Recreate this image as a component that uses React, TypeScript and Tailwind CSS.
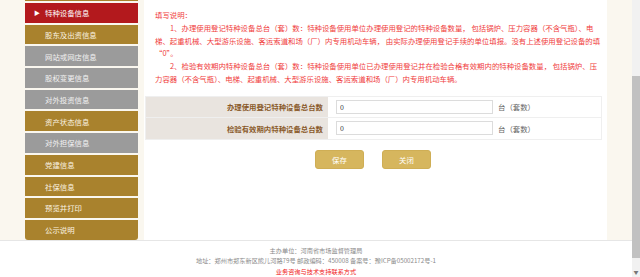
import React from "react";

type MenuItem = {
  label: string;
  tone: "active" | "gold" | "gray";
};

const menu: MenuItem[] = [
  { label: "特种设备信息", tone: "active" },
  { label: "股东及出资信息", tone: "gold" },
  { label: "网站或网店信息", tone: "gray" },
  { label: "股权变更信息", tone: "gray" },
  { label: "对外投资信息", tone: "gray" },
  { label: "资产状态信息", tone: "gold" },
  { label: "对外担保信息", tone: "gray" },
  { label: "党建信息", tone: "gold" },
  { label: "社保信息", tone: "gold" },
  { label: "预览并打印", tone: "gold" },
  { label: "公示说明", tone: "gold" },
];

const toneClass = {
  active: "bg-[#b3191d] text-white",
  gold: "bg-[#a9822d] text-[#fbf3e2]",
  gray: "bg-[#9b9b9b] text-[#f2f2f2]",
};

const font = { fontFamily: '"Noto Sans CJK SC", "Liberation Sans", sans-serif' };

function Sidebar() {
  return (
    <div className="w-[113px] flex flex-col">
      {/* bottom of the item above, scrolled off */}
      <div className="h-[1px] bg-[#a9822d]" />
      {menu.map((item, i) => (
        <div
          key={item.label}
          className={`mt-[2px] h-[19.7px] flex items-center text-[7.4px] leading-none ${toneClass[item.tone]} ${
            i === menu.length - 1 ? "rounded-b-[3px]" : ""
          }`}
        >
          <span className="w-[20px] flex justify-end pr-[5px] text-[6px]">
            {item.tone === "active" ? "▶" : ""}
          </span>
          <span>{item.label}</span>
        </div>
      ))}
    </div>
  );
}

function FormRow({ label }: { label: string }) {
  return (
    <div className="flex h-[21px] border-b border-[#efefef] last:border-b-0">
      <div className="w-[182px] bg-[#e9e4df] flex items-center justify-end pr-[5px] text-[7.4px] font-bold text-[#8a5a2a]">
        {label}
      </div>
      <div className="flex-1 flex items-center pl-[8px]">
        <input
          defaultValue="0"
          className="w-[157px] h-[14px] border border-[#dcdcdc] px-[3px] text-[7px] text-[#333] outline-none"
        />
        <span className="ml-[5px] text-[7.4px] text-[#666]">台（套数）</span>
      </div>
    </div>
  );
}

function Notes() {
  return (
    <div className="text-[7.4px] leading-[12.8px] text-[#f03c3c] whitespace-nowrap">
      <div>填写说明：</div>
      <div className="pl-[15px]">
        1、办理使用登记特种设备总台（套）数：特种设备使用单位办理使用登记的特种设备数量， 包括锅炉、压力容器（不含气瓶）、电
      </div>
      <div>
        梯、起重机械、大型游乐设施、客运索道和场（厂）内专用机动车辆， 由实际办理使用登记手续的单位填报。没有上述使用登记设备的填
      </div>
      <div>“0”。</div>
      <div className="pl-[15px]">
        2、检验有效期内特种设备总台（套）数：特种设备使用单位已办理使用登记并在检验合格有效期内的特种设备数量， 包括锅炉、压
      </div>
      <div>力容器（不含气瓶）、电梯、起重机械、大型游乐设施、客运索道和场（厂）内专用机动车辆。</div>
    </div>
  );
}

function MainPanel() {
  return (
    <div className="w-[463px] bg-white pt-[9px]">
      <div className="pl-[11px]">
        <Notes />
      </div>
      <div className="mt-[10px] ml-[1px] w-[457px] border border-[#efefef] flex flex-col">
        <FormRow label="办理使用登记特种设备总台数" />
        <FormRow label="检验有效期内特种设备总台数" />
      </div>
      <div className="mt-[10px] w-[458px] flex justify-center gap-[18px]">
        <button className="w-[49px] h-[19px] rounded-[3px] bg-[#d6b65e] border border-[#cfae55] text-white text-[7.4px]">
          保存
        </button>
        <button className="w-[49px] h-[19px] rounded-[3px] bg-[#d6b65e] border border-[#cfae55] text-white text-[7.4px]">
          关闭
        </button>
      </div>
    </div>
  );
}

function Footer() {
  return (
    <div className="flex-1 bg-white border-t border-[#e6e6e6] pt-[5px] flex flex-col items-center text-[6.2px] leading-[10.4px] text-[#8a8a8a]">
      <div>主办单位：河南省市场监督管理局</div>
      <div>地址：郑州市郑东新区熊儿河路79号 邮政编码：450008 备案号：豫ICP备05002172号-1</div>
      <div className="text-[#f02020]">业务咨询与技术支持联系方式</div>
    </div>
  );
}

function Scrollbar() {
  return (
    <div className="w-[8px] h-[277px] bg-[#f1f1f1] flex flex-col">
      <div className="h-[76px]" />
      <div className="h-[182px] bg-[#c1c1c1]" />
      <div className="flex-1 flex items-end justify-center pb-[3px] text-[5px] leading-none text-[#777]">
        ▼
      </div>
    </div>
  );
}

export default function App() {
  return (
    <div className="w-[640px] h-[277px] flex overflow-hidden" style={font}>
      <div className="flex-1 flex flex-col">
        <div className="h-[240px] bg-[#faf7ef] flex justify-center">
          <div className="w-[582px] flex gap-[6px]">
            <Sidebar />
            <MainPanel />
          </div>
        </div>
        <Footer />
      </div>
      <Scrollbar />
    </div>
  );
}
